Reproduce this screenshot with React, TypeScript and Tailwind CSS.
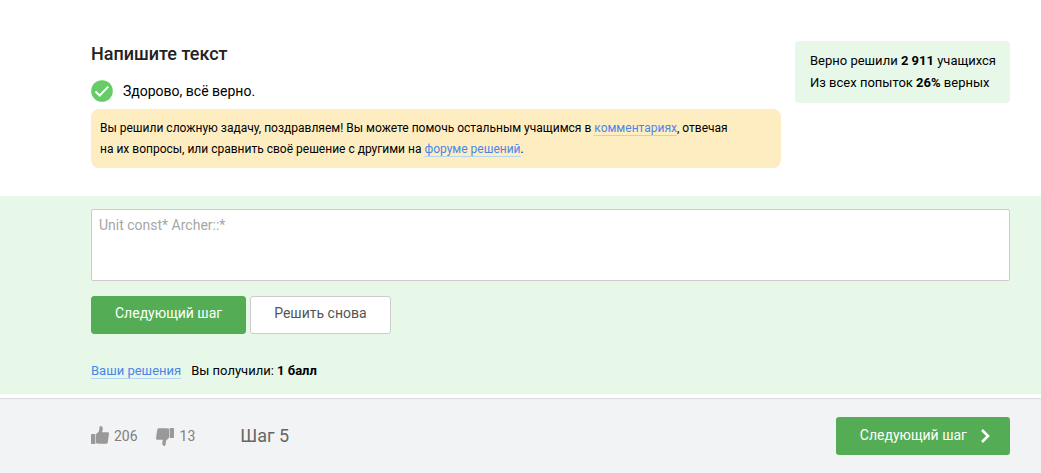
import type { ReactNode } from "react";

function TextLink({ children }: { children: ReactNode }) {
  return (
    <a href="#" className="border-b border-[#b4d4f0] text-[#4a86e8]">
      {children}
    </a>
  );
}

function ThumbIcon({ down = false }: { down?: boolean }) {
  return (
    <svg
      viewBox="0 0 18 18"
      className={down ? "h-[18px] w-[18px] translate-y-px rotate-180" : "h-[18px] w-[18px] -translate-y-px"}
      fill="#999999"
      aria-hidden="true"
    >
      <path d="M0.8 8H3.7Q4.4 8 4.4 8.7V17.3Q4.4 18 3.7 18H0.8Q0 18 0 17.2V8.8Q0 8 0.8 8Z" />
      <path d="M5 8.3L8 5.2L8.5 1Q8.7 0 9.8 0Q11.9 0.3 11.8 2.8L11.2 6.2H16.8Q18.1 6.3 18 7.6L16.8 16.2Q16.6 17.7 15 17.7H7.5L5 17.2Z" />
    </svg>
  );
}

export default function App() {
  return (
    <div className="min-h-screen bg-white font-[Roboto,sans-serif] text-[13px] text-black">
      <main>
        <section className="flex items-start justify-between gap-3.5 pt-[41px] pr-[31px] pb-7 pl-[91px]">
          <div className="max-w-[690px] flex-1">
            <h1 className="text-lg leading-[26px] font-medium text-[#222222]">Напишите текст</h1>
            <div className="mt-[13px] flex items-center gap-2.5">
              <svg viewBox="0 0 22 22" className="h-[22px] w-[22px]" aria-hidden="true">
                <circle cx="11" cy="11" r="10.8" fill="#66cc66" />
                <path d="M4.4 11.5L8.7 15.5L17.3 6.6" fill="none" stroke="#fff" strokeWidth="2" />
              </svg>
              <p className="text-sm leading-[22px]">Здорово, всё верно.</p>
            </div>
            <p className="mt-[7px] rounded-lg bg-[#ffedc2] pt-[9px] pr-10 pb-2 pl-[9px] text-xs leading-[21px]">
              Вы решили сложную задачу, поздравляем! Вы можете помочь остальным учащимся в{" "}
              <TextLink>комментариях</TextLink>, отвечая на их вопросы, или сравнить своё решение с другими на{" "}
              <TextLink>форуме решений</TextLink>.
            </p>
          </div>
          <aside className="shrink-0 rounded bg-[#e7f8e9] py-[9px] pr-3.5 pl-[15px] leading-[22px]">
            <p>
              Верно решили <b>2 911</b> учащихся
            </p>
            <p>
              Из всех попыток <b>26%</b> верных
            </p>
          </aside>
        </section>

        <section className="bg-[#e7f8e9] pt-[13px] pr-[31px] pb-[13px] pl-[91px]">
          <textarea
            aria-label="Ваш ответ"
            disabled
            defaultValue="Unit const* Archer::*"
            className="block h-[72px] w-full resize-none rounded-xs border border-[#cccccc] bg-white px-[7px] py-1 text-sm leading-[22px] text-[#a6a6a6]"
          />
          <div className="mt-[15px] flex gap-1 text-sm">
            <button className="h-[38px] rounded-[3px] border border-[#54ad54] bg-[#54ad54] px-[23px] pb-1 text-white">
              Следующий шаг
            </button>
            <button className="h-[38px] rounded-[3px] border border-[#cccccc] bg-white px-[23px] pb-1 text-[#555555]">
              Решить снова
            </button>
          </div>
          <div className="mt-[26px] flex gap-2.5 leading-[21px]">
            <span>
              <TextLink>Ваши решения</TextLink>
            </span>
            <span>
              Вы получили: <b>1 балл</b>
            </span>
          </div>
        </section>
      </main>

      <footer className="mt-1 flex items-center border-t border-[#d9dbdd] bg-[#f2f3f5] py-[18px] pr-[31px] pl-[91px] text-sm text-[#808080]">
        <button aria-label="Нравится" className="flex items-center gap-[5px]">
          <ThumbIcon />
          206
        </button>
        <button aria-label="Не нравится" className="ml-[18px] flex items-center gap-1.5">
          <ThumbIcon down />
          13
        </button>
        <span className="ml-[45px] text-lg text-[#666666]">Шаг 5</span>
        <button className="ml-auto flex h-[38px] items-center gap-3.5 rounded-[3px] bg-[#54ad54] pr-5 pl-6 text-white">
          <span className="pb-0.5">Следующий шаг</span>
          <svg viewBox="0 0 9 14" className="h-3.5 w-[9px]" fill="none" stroke="#fff" strokeWidth="2.6" aria-hidden="true">
            <path d="M1 1L7 7L1 13" />
          </svg>
        </button>
      </footer>
    </div>
  );
}
